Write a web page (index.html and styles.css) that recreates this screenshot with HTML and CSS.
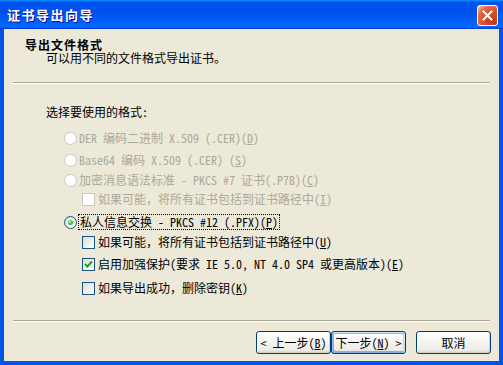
FILE: index.html
```html
<!DOCTYPE html>
<html lang="zh-CN">
<head>
    <meta charset="UTF-8">
    <title>证书导出向导</title>
    <link rel="stylesheet" href="styles.css">
</head>
<body>
    <div class="window">
        <div class="title-bar">
            <span class="title-text">证书导出向导</span>
            <button type="button" class="close-btn" aria-label="关闭">
                <svg width="13" height="13" viewBox="0 0 13 13">
                    <path d="M2.5 2.5 L10.5 10.5 M10.5 2.5 L2.5 10.5" stroke="#ffffff" stroke-width="2" stroke-linecap="square"/>
                </svg>
            </button>
        </div>
        <div class="window-body">
            <div class="header">
                <div class="heading">导出文件格式</div>
                <div class="subheading">可以用不同的文件格式导出证书。</div>
            </div>
            <div class="separator"></div>

            <div class="content">
                <div class="prompt">选择要使用的格式:</div>

                <div class="option radio disabled first">
                    <span class="radio-box"></span>
                    <span class="label">DER 编码二进制 X.509 (.CER)(<u>D</u>)</span>
                </div>
                <div class="option radio disabled mt-6">
                    <span class="radio-box"></span>
                    <span class="label">Base64 编码 X.509 (.CER) (<u>S</u>)</span>
                </div>
                <div class="option radio disabled mt-4">
                    <span class="radio-box"></span>
                    <span class="label">加密消息语法标准 - PKCS #7 证书(.P7B)(<u>C</u>)</span>
                </div>
                <div class="option check disabled mt-3">
                    <span class="check-box"></span>
                    <span class="label">如果可能，将所有证书包括到证书路径中(<u>I</u>)</span>
                </div>
                <div class="option radio mt-7">
                    <span class="radio-box selected"></span>
                    <span class="label focused">私人信息交换 - PKCS #12 (.PFX)(<u>P</u>)</span>
                </div>
                <div class="option check mt-4">
                    <span class="check-box"></span>
                    <span class="label">如果可能，将所有证书包括到证书路径中(<u>U</u>)</span>
                </div>
                <div class="option check mt-6">
                    <span class="check-box">
                        <svg width="11" height="11" viewBox="0 0 11 11">
                            <path d="M2 5 L4.3 7.5 L9 2.5" fill="none" stroke="#21a121" stroke-width="2"/>
                        </svg>
                    </span>
                    <span class="label">启用加强保护(要求 IE 5.0, NT 4.0 SP4 或更高版本)(<u>E</u>)</span>
                </div>
                <div class="option check mt-8">
                    <span class="check-box"></span>
                    <span class="label">如果导出成功，删除密钥(<u>K</u>)</span>
                </div>
            </div>

            <div class="separator"></div>
            <div class="buttons">
                <button type="button" class="btn">&lt; 上一步(<u>B</u>)</button>
                <button type="button" class="btn default">下一步(<u>N</u>) &gt;</button>
                <button type="button" class="btn cancel">取消</button>
            </div>
        </div>
    </div>
</body>
</html>
```

FILE: styles.css
```css
body {
    margin: 0;
    padding: 0;
    font-family: "Noto Sans Mono CJK SC", "Noto Sans CJK SC", sans-serif;
    font-size: 12px;
    color: #000000;
}
.window {
    width: 503px;
    height: 365px;
    display: flex;
    flex-direction: column;
    background-color: #0055ea;
}
.title-bar {
    height: 29px;
    flex-shrink: 0;
    display: flex;
    align-items: center;
    justify-content: space-between;
    padding: 0 5px 0 7px;
    background: linear-gradient(180deg, #0997ff, #0053ee 8%, #0050ee 40%, #0066ff 88%, #0066ff 93%, #005bff 95%, #003dd7 96%, #003dd7);
    box-sizing: border-box;
}
.title-text {
    font-family: "Noto Sans CJK SC", sans-serif;
    font-size: 13px;
    font-weight: bold;
    letter-spacing: 1.5px;
    color: #ffffff;
    text-shadow: 1px 1px #0f1089;
    line-height: 14px;
}
.close-btn {
    width: 21px;
    height: 21px;
    padding: 0;
    border: 1px solid #ffffff;
    border-radius: 3px;
    background: radial-gradient(circle at 85% 85%, #c23a14 0%, #d9512c 50%, #e06a48 72%, #eea58e 90%, #ffffff 100%);
    display: flex;
    align-items: center;
    justify-content: center;
    margin-top: 1px;
}
.window-body {
    flex: 1;
    display: flex;
    flex-direction: column;
    background-color: #ece9d8;
    border-style: solid;
    border-width: 0 4px 4px 4px;
    border-color: #0055ea;
    box-shadow: -1px 0 #0831d9, 1px 0 #003bda;
}
.header {
    padding: 10px 0 0 21px;
}
.heading {
    font-family: "Noto Sans CJK SC", sans-serif;
    font-weight: bold;
    letter-spacing: 1px;
    line-height: 12px;
}
.subheading {
    padding-left: 21px;
    line-height: 14px;
}
.separator {
    height: 0;
    margin: 17px 9px 0 9px;
    border-top: 1px solid #aca899;
    border-bottom: 1px solid #ffffff;
}
.content {
    flex: 1;
}
.prompt {
    margin: 21px 0 0 42px;
    line-height: 14px;
}
.option {
    display: flex;
    align-items: center;
    height: 16px;
    line-height: 14px;
}
.option.first { margin-top: 11px; }
.mt-3 { margin-top: 3px; }
.mt-4 { margin-top: 4px; }
.mt-6 { margin-top: 6px; }
.mt-7 { margin-top: 7px; }
.mt-8 { margin-top: 8px; }
.option.radio {
    margin-left: 60px;
    gap: 2px;
}
.option.check {
    margin-left: 78px;
    gap: 3px;
}
.option.disabled {
    color: #aca899;
}
.label u {
    text-decoration: underline;
}
.label.focused {
    outline: 1px dotted #000000;
    padding: 0 1px;
}
.radio-box {
    width: 13px;
    height: 13px;
    box-sizing: border-box;
    border: 1px solid #1c5180;
    border-radius: 50%;
    background: linear-gradient(135deg, #dcdcd7, #ffffff);
    display: flex;
    align-items: center;
    justify-content: center;
    flex-shrink: 0;
}
.disabled .radio-box {
    border-color: #cac8bb;
    background: #ffffff;
}
.radio-box.selected::after {
    content: "";
    width: 5px;
    height: 5px;
    border-radius: 50%;
    background: radial-gradient(circle at 35% 35%, #a0f0a0, #4dbf4d 50%, #21a121);
}
.check-box {
    width: 13px;
    height: 13px;
    box-sizing: border-box;
    border: 1px solid #1c5180;
    background: linear-gradient(135deg, #dcdcd7, #ffffff);
    display: flex;
    align-items: center;
    justify-content: center;
    flex-shrink: 0;
}
.disabled .check-box {
    border-color: #cac8bb;
    background: #ffffff;
}
.buttons {
    display: flex;
    justify-content: flex-end;
    margin: 9px 0 7px 0;
    padding-right: 8px;
}
.btn {
    width: 75px;
    height: 23px;
    padding: 0;
    font-family: inherit;
    font-size: 12px;
    color: #000000;
    border: 1px solid #003c74;
    border-radius: 3px;
    background: linear-gradient(180deg, #ffffff, #ecebe6 86%, #d6d0c5);
    box-shadow: inset -1px -1px #d6d0c5, inset 1px 1px #ffffff;
    line-height: 14px;
}
.btn.default {
    box-shadow: inset -1px 1px #cee7ff, inset 1px 2px #98b8ea, inset -2px 2px #bcd4f6, inset 1px -1px #89ade4, inset 2px -2px #89ade4;
}
.btn.cancel {
    margin-left: 10px;
}
```
